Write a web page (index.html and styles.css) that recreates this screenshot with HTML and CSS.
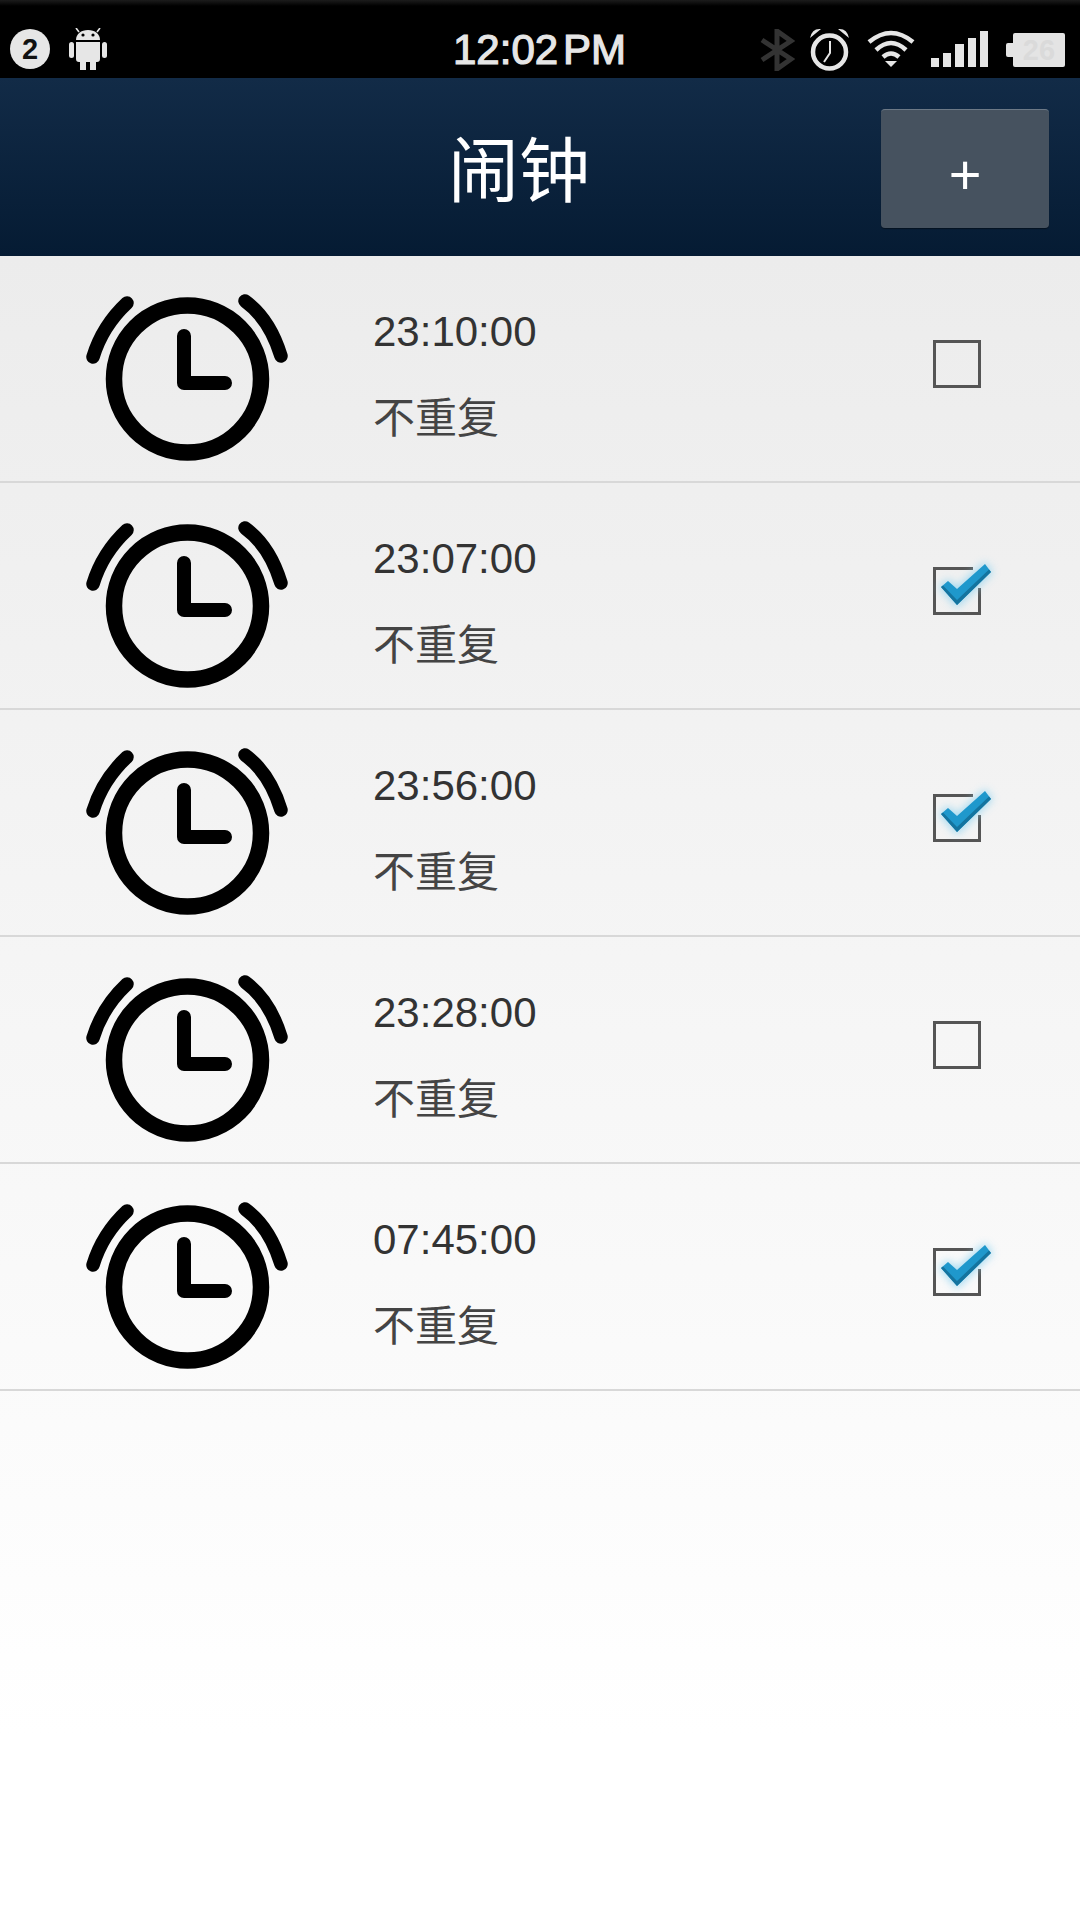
FILE: index.html
```html
<!DOCTYPE html>
<html lang="zh-CN">

<head>
    <meta charset="UTF-8">
    <title>闹钟</title>
    <link rel="stylesheet" href="styles.css">
</head>

<body>
    <svg class="sprites" width="0" height="0">
        <defs>
            <symbol id="clock" viewBox="0 0 205 180">
                <circle cx="102.5" cy="93" r="73.5" fill="none" stroke="#000" stroke-width="16.5" />
                <path d="M8 71 C15 48 27 31 42 17 M160 15 C178 28 189 47 196 70" fill="none" stroke="#000"
                    stroke-width="13.5" stroke-linecap="round" />
                <path d="M99 50 V97 H140" fill="none" stroke="#000" stroke-width="14" stroke-linecap="round"
                    stroke-linejoin="round" />
            </symbol>
            <symbol id="box-off" viewBox="0 0 72 64">
                <rect x="5.5" y="13.5" width="45" height="45" fill="none" stroke="#555" stroke-width="3" />
            </symbol>
            <symbol id="box-on" viewBox="0 0 72 64">
                <path d="M44 13.5 H5.5 V58.5 H50.5 V33" fill="none" stroke="#555" stroke-width="3" />
                <path d="M10 32 L19 24 L28 32 L56 7 L64 17 L28 53 Z" fill="#8fd3f0" opacity="0.8" filter="url(#glow)" />
                <path d="M12 32 L19 26 L28 34 L56 9 L62 17 L28 50 Z" fill="#1f98cc" />
                <path d="M12 32 L28 50 L62 17 L60 14.5 L28 45 L14 30.5 Z" fill="#14749f" />
            </symbol>
            <filter id="glow" x="-30%" y="-30%" width="160%" height="160%">
                <feGaussianBlur stdDeviation="4" />
            </filter>
        </defs>
    </svg>

    <div class="status-bar">
        <div class="status-left">
            <span class="badge">2</span>
            <svg class="android" viewBox="0 0 38 42" width="38" height="42">
                <path d="M7 12 C7 6 12 2 19 2 C26 2 31 6 31 12 Z" fill="#e6e6e6" />
                <path d="M10 4 L7 0 M28 4 L31 0" stroke="#e6e6e6" stroke-width="1.6" />
                <circle cx="14" cy="7" r="1.6" fill="#000" />
                <circle cx="24" cy="7" r="1.6" fill="#000" />
                <path d="M7 14 H31 V31 Q31 34 28 34 H27 V42 H21 V34 H17 V42 H11 V34 H10 Q7 34 7 31 Z" fill="#e6e6e6" />
                <rect x="0" y="14" width="5" height="16" rx="2.5" fill="#e6e6e6" />
                <rect x="33" y="14" width="5" height="16" rx="2.5" fill="#e6e6e6" />
            </svg>
        </div>
        <div class="clock-text">12:02<span class="clock-unit">PM</span></div>
        <div class="status-right">
            <svg class="icon-bluetooth" viewBox="0 0 36 42" width="36" height="42">
                <path d="M3 11 L32 30 L18 40 V2 L32 12 L3 31" fill="none" stroke="#333" stroke-width="5" />
            </svg>
            <svg class="icon-alarm" viewBox="0 0 41 44" width="41" height="44">
                <circle cx="20.5" cy="25" r="16.5" fill="none" stroke="#e6e6e6" stroke-width="4.5" />
                <path d="M21 14 V26 L15 35" fill="none" stroke="#e6e6e6" stroke-width="2" />
                <path d="M1 11 Q3 1 12 2 Z M40 11 Q38 1 29 2 Z" fill="#e6e6e6" />
            </svg>
            <svg class="icon-wifi" viewBox="0 0 48 38" width="48" height="38">
                <path d="M2 12 Q24 -6 46 12 M9 20 Q24 6 39 20 M16 27 Q24 20 32 27" fill="none" stroke="#e6e6e6"
                    stroke-width="4.5" />
                <path d="M18 31 H30 L24 37 Z" fill="#e6e6e6" />
            </svg>
            <div class="signal">
                <i class="bar-1"></i>
                <i class="bar-2"></i>
                <i class="bar-3"></i>
                <i class="bar-4"></i>
                <i class="bar-5"></i>
            </div>
            <div class="battery">26</div>
        </div>
    </div>

    <header class="title-bar">
        <h1>闹钟</h1>
        <button class="add-button">+</button>
    </header>

    <main class="alarm-list">
        <div class="alarm-row">
            <svg class="alarm-icon"><use href="#clock" /></svg>
            <div class="alarm-text">
                <div class="alarm-time">23:10:00</div>
                <div class="alarm-repeat">不重复</div>
            </div>
            <svg class="alarm-check"><use href="#box-off" /></svg>
        </div>
        <div class="alarm-row">
            <svg class="alarm-icon"><use href="#clock" /></svg>
            <div class="alarm-text">
                <div class="alarm-time">23:07:00</div>
                <div class="alarm-repeat">不重复</div>
            </div>
            <svg class="alarm-check"><use href="#box-on" /></svg>
        </div>
        <div class="alarm-row">
            <svg class="alarm-icon"><use href="#clock" /></svg>
            <div class="alarm-text">
                <div class="alarm-time">23:56:00</div>
                <div class="alarm-repeat">不重复</div>
            </div>
            <svg class="alarm-check"><use href="#box-on" /></svg>
        </div>
        <div class="alarm-row">
            <svg class="alarm-icon"><use href="#clock" /></svg>
            <div class="alarm-text">
                <div class="alarm-time">23:28:00</div>
                <div class="alarm-repeat">不重复</div>
            </div>
            <svg class="alarm-check"><use href="#box-off" /></svg>
        </div>
        <div class="alarm-row">
            <svg class="alarm-icon"><use href="#clock" /></svg>
            <div class="alarm-text">
                <div class="alarm-time">07:45:00</div>
                <div class="alarm-repeat">不重复</div>
            </div>
            <svg class="alarm-check"><use href="#box-on" /></svg>
        </div>
    </main>
</body>

</html>
```

FILE: styles.css
```css
* {
    box-sizing: border-box;
}

body {
    margin: 0;
    width: 1080px;
    height: 1920px;
    overflow: hidden;
    font-family: "Liberation Sans", "Noto Sans CJK SC", sans-serif;
    display: flex;
    flex-direction: column;
    background: #fff;
}

.sprites {
    position: absolute;
}

/* status bar */
.status-bar {
    height: 78px;
    flex: none;
    display: flex;
    align-items: flex-start;
    background: linear-gradient(#1c1c1c 0, #000 6px);
    color: #e6e6e6;
}

.status-left {
    width: 453px;
    padding: 28px 0 0 10px;
    display: flex;
    align-items: center;
    gap: 19px;
}

.badge {
    width: 40px;
    height: 40px;
    border-radius: 50%;
    background: #e6e6e6;
    color: #111;
    font-size: 29px;
    font-weight: bold;
    line-height: 40px;
    text-align: center;
}

.clock-text {
    width: 307px;
    padding-top: 26px;
    font-size: 42px;
    line-height: 48px;
    -webkit-text-stroke: 1.2px #e6e6e6;
}

.clock-unit {
    margin-left: 5px;
}

.status-right {
    display: flex;
    align-items: flex-start;
    gap: 13px;
}

.icon-bluetooth {
    margin: 29px 1px 0 -1px;
}

.icon-alarm {
    margin-top: 27px;
}

.icon-wifi {
    margin: 30px 0 0 4px;
}

.signal {
    margin: 31px 0 0 3px;
    width: 57px;
    height: 36px;
    display: flex;
    align-items: flex-end;
    gap: 4px;
}

.signal i {
    flex: 1;
    background: #e6e6e6;
}

.bar-1 { height: 9px; }
.bar-2 { height: 14px; }
.bar-3 { height: 23px; }
.bar-4 { height: 29px; }
.bar-5 { height: 36px; }

.battery {
    position: relative;
    margin: 33px 0 0 12px;
    width: 52px;
    height: 34px;
    border-radius: 2px;
    background: #e4e4e4;
    color: #dadada;
    font-size: 29px;
    font-weight: bold;
    line-height: 34px;
    text-align: center;
}

/* battery nub */
.battery::before {
    content: "";
    position: absolute;
    left: -7px;
    top: 10px;
    width: 7px;
    height: 14px;
    border-radius: 2px 0 0 2px;
    background: #e4e4e4;
}

/* title bar */
.title-bar {
    height: 178px;
    flex: none;
    padding: 31px 31px 28px 157px;
    display: flex;
    align-items: center;
    background: linear-gradient(#122b47, #051b33);
}

.title-bar h1 {
    flex: 1;
    margin: 0 0 8px;
    color: #fff;
    font-size: 71px;
    font-weight: normal;
    text-align: center;
}

.add-button {
    width: 168px;
    height: 119px;
    padding: 11px 0 0;
    border: none;
    border-top: 1px solid #6d7986;
    border-radius: 4px;
    background: #46525f;
    box-shadow: 0 1px 1px rgba(0, 0, 0, 0.4);
    color: #fff;
    font-family: "Liberation Sans", sans-serif;
    font-size: 56px;
    line-height: 1;
}

/* alarm list */
.alarm-list {
    flex: 1;
    background: linear-gradient(#ececec, #fff 1480px);
}

.alarm-row {
    height: 227px;
    display: flex;
    align-items: flex-start;
    border-bottom: 2px solid #d8d8d8;
}

.alarm-icon {
    flex: none;
    width: 205px;
    height: 180px;
    margin: 30px 0 0 85px;
}

.alarm-text {
    flex: 1;
    margin-left: 83px;
    padding-top: 46px;
    color: #333;
}

.alarm-time {
    font-size: 42px;
    line-height: 60px;
}

.alarm-repeat {
    margin-top: 28px;
    color: #444;
    font-size: 42px;
    line-height: 58px;
}

.alarm-check {
    flex: none;
    width: 72px;
    height: 64px;
    margin: 72px 79px 0 0;
}
```
